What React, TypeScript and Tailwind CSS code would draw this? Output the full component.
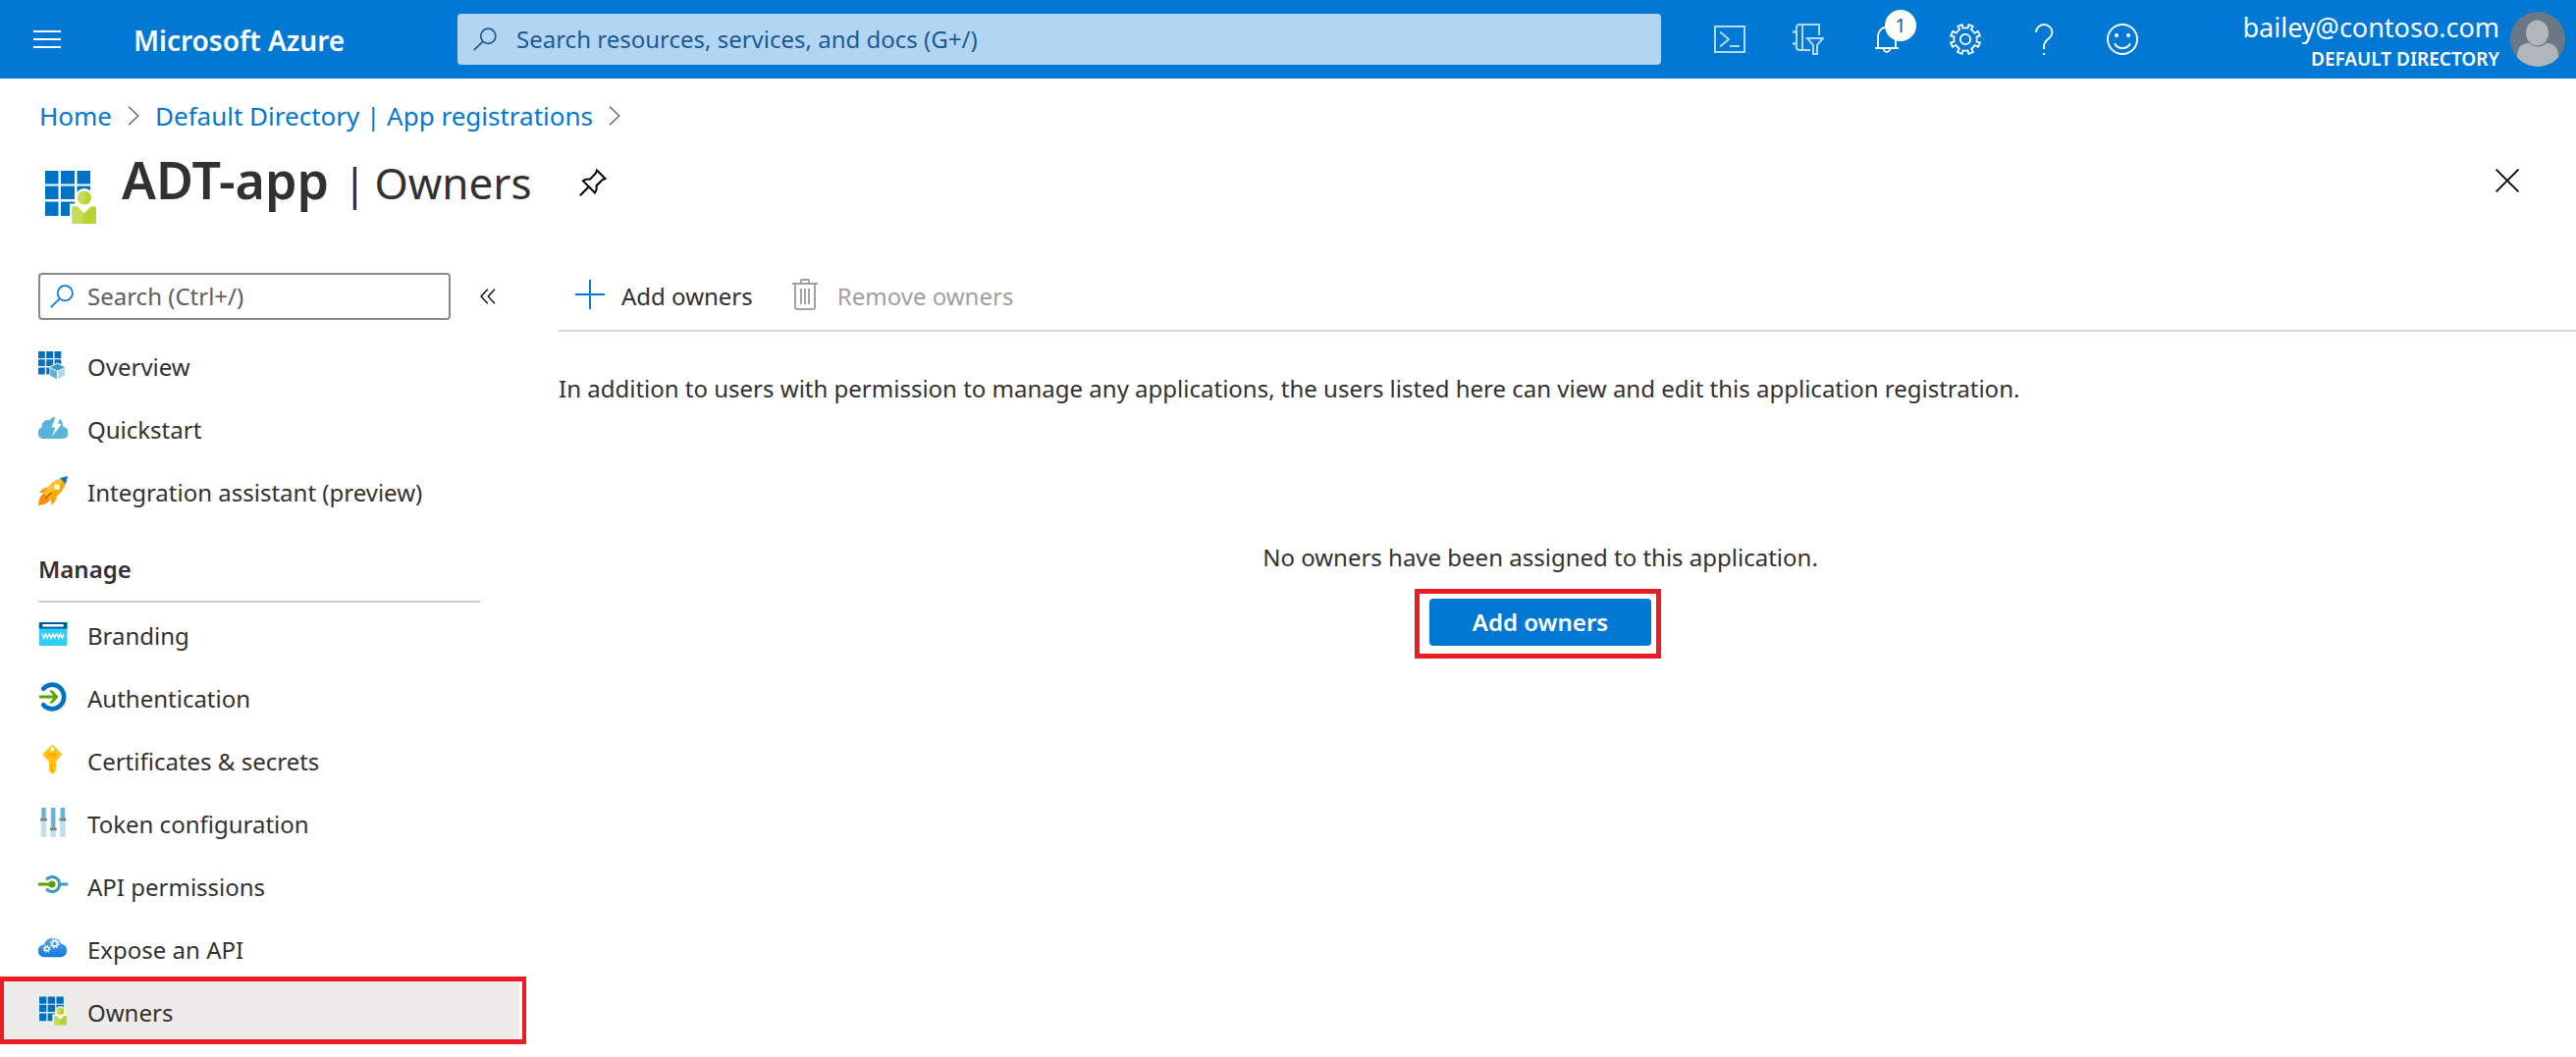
import type { ReactNode } from "react";

type IconProps = { className?: string };

function SearchIcon({ className }: IconProps) {
  return (
    <svg className={className} viewBox="0 0 24 24" fill="none" stroke="currentColor" strokeWidth="1.7" aria-hidden="true">
      <circle cx="15.3" cy="8.7" r="7.6" />
      <path d="M9.9 14.1 0.8 23.2" />
    </svg>
  );
}

function ChevronIcon() {
  return (
    <svg className="h-5 w-3 shrink-0 text-[#605e5c]" viewBox="0 0 12 20" fill="none" stroke="currentColor" strokeWidth="1.3" aria-hidden="true">
      <path d="M1 0.8 10.8 10 1 19.2" />
    </svg>
  );
}

function ConsoleIcon() {
  return (
    <svg className="h-8 w-8 text-[#b5d8f5]" viewBox="0 0 32 32" fill="none" stroke="currentColor" strokeWidth="2" aria-hidden="true">
      <rect x="1" y="3" width="30" height="26" />
      <path d="M6 8.5 15 16 6 23.5M16 23h10" />
    </svg>
  );
}

function DirectoryFilterIcon() {
  return (
    <svg className="h-8 w-8 text-[#b5d8f5]" viewBox="0 0 32 32" fill="none" stroke="currentColor" strokeWidth="2" aria-hidden="true">
      <path d="M27 12V1H7Q4 1 4 4V24Q4 27 7 27H18M10 1V27" />
      <path d="M0 8.5H5M0 20.5H5" strokeWidth="2.6" />
      <path d="M15 15H31L25 22V31H21V22Z" />
    </svg>
  );
}

function BellIcon() {
  return (
    <svg className="h-8 w-8" viewBox="0 0 32 32" fill="none" stroke="currentColor" strokeWidth="1.8" aria-hidden="true">
      <path d="M4 25H28M7 25V13A9 9.5 0 0 1 25 13V25" />
      <path d="M12.8 25.5A3.2 3.4 0 0 0 19.2 25.5" />
    </svg>
  );
}

function GearIcon() {
  return (
    <svg className="h-8 w-8" viewBox="0 0 32 32" fill="none" stroke="currentColor" strokeWidth="1.8" strokeLinejoin="round" aria-hidden="true">
      <path d="M13.4 4.6 12.7 1 8.2 2.9 10.3 6A11.4 11.4 0 0 0 6.6 9.7L3.2 7.8 1 12.7 4.6 13.4A11.4 11.4 0 0 0 4.6 18.6L1 19.3 2.9 23.8 6.4 22A11.4 11.4 0 0 0 9.8 25.6L7.9 29 12.7 31 13.4 27.4A11.4 11.4 0 0 0 18.6 27.4L19.3 31 24 29 22.2 25.6A11.4 11.4 0 0 0 25.6 22L29.1 23.8 31 19.3 27.4 18.6A11.4 11.4 0 0 0 27.4 13.4L31 12.7 28.8 7.8 25.4 9.7A11.4 11.4 0 0 0 21.7 6L23.8 2.9 19.3 1 18.6 4.6A11.4 11.4 0 0 0 13.4 4.6Z" />
      <circle cx="16" cy="16" r="5.2" />
    </svg>
  );
}

function HelpIcon() {
  return (
    <svg className="h-8 w-8" viewBox="0 0 32 32" fill="none" stroke="currentColor" strokeWidth="1.8" aria-hidden="true">
      <path d="M8 9A8.2 8 0 0 1 24.4 9C24.4 15.5 16 16 16 23V26" />
      <path d="M16 30V32" strokeWidth="2.2" />
    </svg>
  );
}

function SmileIcon() {
  return (
    <svg className="h-8 w-8" viewBox="0 0 32 32" fill="none" stroke="currentColor" strokeWidth="1.9" aria-hidden="true">
      <circle cx="16" cy="16" r="15" />
      <path d="M8 20.2A9 9 0 0 0 24 20.2" />
      <circle cx="10" cy="12" r="2" fill="currentColor" stroke="none" />
      <circle cx="22" cy="12" r="2" fill="currentColor" stroke="none" />
    </svg>
  );
}

function Avatar() {
  return (
    <svg className="h-14 w-14 shrink-0" viewBox="0 0 56 56" aria-hidden="true">
      <defs>
        <clipPath id="avatar-clip"><circle cx="28" cy="28" r="28" /></clipPath>
      </defs>
      <g clipPath="url(#avatar-clip)">
        <rect width="56" height="56" fill="#6b7785" />
        <path d="M7 56V44Q8 32 19 32Q28 39 37 32Q48 32 49 44V56Z" fill="#b0b6bb" />
        <ellipse cx="27.5" cy="21.5" rx="11.5" ry="13" fill="#b0b6bb" />
      </g>
    </svg>
  );
}

function OwnersIcon({ className }: IconProps) {
  return (
    <svg className={className} viewBox="0 0 52 54" aria-hidden="true">
      <g fill="#0072c6">
        <path d="M0 0H13.5V13.5H0ZM16 0H30V13.5H16ZM32.5 0H46V13.5H32.5Z" />
        <path d="M0 15.5H13.5V29H0ZM16 15.5H30V29H16ZM32.5 15.5H46V29H32.5Z" />
        <path d="M0 31.5H13.5V46H0ZM16 31.5H30V46H16Z" />
      </g>
      <circle cx="40" cy="27.5" r="9.5" fill="#fff" />
      <path d="M25 33.5H52V54H25Z" fill="#fff" />
      <circle cx="40" cy="27.5" r="7" fill="#b8d432" />
      <path d="M40 20.5A7 7 0 0 0 38.5 34.3Q41.5 27 40 20.5Z" fill="#c4dd5c" />
      <path d="M27.5 36.5H33L39.5 43.5 46.5 36.5H52V54H27.5Z" fill="#b8d432" />
      <path d="M27.5 36.5H33L39.5 43.5 38.5 54H27.5Z" fill="#c4dd5c" />
    </svg>
  );
}

function PinIcon() {
  return (
    <svg className="h-7 w-7" viewBox="0 0 28 28" fill="none" stroke="currentColor" strokeWidth="2" strokeLinejoin="miter" aria-hidden="true">
      <path d="M18 1.5 26.5 10 23.5 11.3 17.5 17.2Q18.3 21.5 16 24.5L3.8 12.2Q7 9.7 11 10.7L16.7 4.7ZM9.8 18.2 0.8 27.2" />
    </svg>
  );
}

function OverviewIcon() {
  return (
    <svg className="h-[30px] w-[30px]" viewBox="0 0 30 30" aria-hidden="true">
      <path fill="#0072c6" d="M0 1H6.8V8H0ZM8.2 1H15.2V8H8.2ZM16.5 1H23.3V8H16.5ZM0 9.3H6.8V16H0ZM8.2 9.3H15.2V16H8.2ZM16.5 9.3H23.3V16H16.5ZM0 17.5H6.8V24.4H0ZM8.2 17.5H15.2V24.4H8.2Z" />
      <path fill="#fff" d="M19.5 12.4 27.8 16.4V26L19.5 30 11.4 26V16.4Z" />
      <path fill="#3999c6" d="M19.5 13.4 27 17.2 19.5 20.8 12.2 17.2Z" />
      <path fill="#59b4d9" d="M12.2 18.1 19 21.5V29.3L12.2 25.7Z" />
      <path fill="#a9dbef" d="M27 18.1 20.1 21.5V29.3L27 25.7Z" />
    </svg>
  );
}

function QuickstartIcon() {
  return (
    <svg className="h-[30px] w-[30px]" viewBox="0 0 30 30" aria-hidden="true">
      <path fill="#59b4d9" d="M6 26A6 6 0 0 1 3.8 14.3A6 6 0 0 1 11.5 7.2Q14 3.5 18.6 4.2Q23.3 5 25 10.5L25.3 14A6 6 0 0 1 24.5 26Z" />
      <path fill="#fff" d="M17.5 3.8H22.6L20 10.8H24L14.3 23.2 17.2 14.6H13.6Z" />
    </svg>
  );
}

function RocketIcon() {
  return (
    <svg className="h-[30px] w-[30px]" viewBox="0 0 30 30" aria-hidden="true">
      <path fill="#ff9a1f" d="M10 11.5Q4.5 11.5 1.2 17L7 17.5ZM18.5 19.8Q19 26 13.5 29.4L12.7 23.5Z" />
      <path fill="#ff8c00" d="M6 17.5Q0.5 20 0 30Q9.5 29.2 12.5 23.6Z" />
      <path fill="#fcc32a" d="M23 2.3 28 7.2Q25.5 17 13.5 24.3L6 16.7Q12.5 5 23 2.3Z" />
      <path fill="#f2ae00" d="M28 7.2Q25.5 17 13.5 24.3L9.8 20.6 25.5 4.8Z" />
      <path fill="#0f72c9" d="M30 0 28 8.2 22 2.2Z" />
      <circle cx="19.2" cy="11.2" r="2.8" fill="#fff" />
      <path d="M7 23.3 13.6 16.7" stroke="#c8550d" strokeWidth="1.6" />
    </svg>
  );
}

function BrandingIcon() {
  return (
    <svg className="h-[30px] w-[30px]" viewBox="0 0 30 30" aria-hidden="true">
      <rect x="0.8" y="3" width="28.6" height="24" rx="1.2" fill="#32cdf2" />
      <path fill="#005ba1" d="M2 3H28.2Q29.4 3 29.4 4.2V9.4H0.8V4.2Q0.8 3 2 3Z" />
      <rect x="4.3" y="5" width="21.4" height="2.6" fill="#fff" />
      <path d="M3.8 14.8 5.5 19.2 7.3 15 9.1 19.2 10.8 14.8M11.3 14.8 13 19.2 14.9 15 16.7 19.2 18.4 14.8M19 14.8 20.7 19.2 22.5 15 24.3 19.2 26 14.8" fill="none" stroke="#fff" strokeWidth="1.4" />
    </svg>
  );
}

function AuthenticationIcon() {
  return (
    <svg className="h-[30px] w-[30px]" viewBox="0 0 30 30" fill="none" aria-hidden="true">
      <path d="M5.2 6.8A12 12.4 0 1 1 5.2 23.2" stroke="#0072c6" strokeWidth="4.6" strokeLinecap="round" />
      <path d="M1 15H18" stroke="#57a300" strokeWidth="3" />
      <path d="M11 8.6H14.6L20.6 15 14.6 21.4H11L16.6 15Z" fill="#57a300" />
    </svg>
  );
}

function KeyIcon() {
  return (
    <svg className="h-[30px] w-[30px]" viewBox="0 0 30 30" aria-hidden="true">
      <path fill="#ffc514" fillRule="evenodd" d="M12.8 0.8Q14.3-.5 15.8 .8L23.2 8.2Q24.4 9.6 23.2 11L18 17.2V19L19 20 18 21.2 19 22.4 18 23.6V26.5L14.5 30 11 26.5V17.2L5.4 11Q4.2 9.6 5.4 8.2ZM14.3 2.2A1.9 2.1 0 1 0 14.3 6.4A1.9 2.1 0 1 0 14.3 2.2Z" />
      <path d="M9.5 9.6H19M9.5 12H19" stroke="#ff9b0a" strokeWidth="1.1" />
      <path d="M13.7 18.5V27.5" stroke="#ff9b0a" strokeWidth="1.2" />
    </svg>
  );
}

function SlidersIcon() {
  return (
    <svg className="h-[30px] w-[30px]" viewBox="0 0 30 30" aria-hidden="true">
      <path fill="#dcdcdc" d="M2.6 0H8.4V30H2.6ZM12.3 0H18.1V30H12.3ZM22 0H27.8V30H22Z" />
      <path fill="#59b4d9" d="M3.6 0H7.4V12H3.6ZM13.3 0H17.1V21H13.3ZM23 0H26.8V12H23Z" />
      <path fill="#b8e0f0" d="M3.6 12H7.4V29H3.6ZM13.3 21H17.1V29H13.3ZM23 12H26.8V29H23Z" />
      <path fill="#9a9a9a" d="M2.2 10.5H8.8V13.4H2.2ZM11.9 20.3H18.5V23.2H11.9ZM21.6 10.5H28.2V13.4H21.6Z" />
      <path fill="#5c5c5c" d="M2.2 11.8H8.8V12.8H2.2ZM11.9 21.6H18.5V22.6H11.9ZM21.6 11.8H28.2V12.8H21.6Z" />
    </svg>
  );
}

function ApiPermissionsIcon() {
  return (
    <svg className="h-[30px] w-[30px]" viewBox="0 0 30 30" fill="none" aria-hidden="true">
      <path d="M8.2 9.2A7.6 7.6 0 1 1 8.2 18.8M22 14H30" stroke="#3999c6" strokeWidth="3" />
      <path d="M0 14H13" stroke="#57a300" strokeWidth="3" />
      <circle cx="14" cy="14" r="3.6" fill="#57a300" />
    </svg>
  );
}

function ExposeApiIcon() {
  return (
    <svg className="h-[30px] w-[30px]" viewBox="0 0 30 30" fill="none" aria-hidden="true">
      <defs>
        <linearGradient id="cloud-fill" x1="0" y1="0" x2="0" y2="1">
          <stop offset="0" stopColor="#5ea0ef" />
          <stop offset="1" stopColor="#0f7bdc" />
        </linearGradient>
      </defs>
      <path fill="url(#cloud-fill)" d="M6.5 24.2A6.5 6.3 0 0 1 6 11.4A9.2 9.4 0 0 1 23.4 10.8A6.8 6.8 0 0 1 23.5 24.2Z" />
      <circle cx="16.7" cy="10.4" r="2.7" stroke="#fff" strokeWidth="1.7" />
      <circle cx="16.7" cy="10.4" r="4.3" stroke="#fff" strokeWidth="1.4" strokeDasharray="1.7 1.68" />
      <circle cx="8.7" cy="15.8" r="2" stroke="#fff" strokeWidth="1.4" />
      <circle cx="8.7" cy="15.8" r="3.3" stroke="#fff" strokeWidth="1.2" strokeDasharray="1.3 1.29" />
    </svg>
  );
}

function PlusIcon() {
  return (
    <svg className="h-[30px] w-[30px] text-[#0078d4]" viewBox="0 0 30 30" stroke="currentColor" strokeWidth="2" aria-hidden="true">
      <path d="M15 0V30M0 15H30" />
    </svg>
  );
}

function TrashIcon() {
  return (
    <svg className="h-8 w-[26px]" viewBox="0 0 26 32" fill="none" stroke="currentColor" strokeWidth="1.9" aria-hidden="true">
      <path d="M0 5H26M9 5V1.5Q9 1 9.5 1H16.5Q17 1 17 1.5V5M3 5V29.5Q3 31 4.5 31H21.5Q23 31 23 29.5V5" />
      <path d="M9 10V26M13 10V26M17 10V26" />
    </svg>
  );
}

type NavItem = { label: string; icon: ReactNode; selected?: boolean };

const topItems: NavItem[] = [
  { label: "Overview", icon: <OverviewIcon /> },
  { label: "Quickstart", icon: <QuickstartIcon /> },
  { label: "Integration assistant (preview)", icon: <RocketIcon /> },
];

const manageItems: NavItem[] = [
  { label: "Branding", icon: <BrandingIcon /> },
  { label: "Authentication", icon: <AuthenticationIcon /> },
  { label: "Certificates & secrets", icon: <KeyIcon /> },
  { label: "Token configuration", icon: <SlidersIcon /> },
  { label: "API permissions", icon: <ApiPermissionsIcon /> },
  { label: "Expose an API", icon: <ExposeApiIcon /> },
  { label: "Owners", icon: <OwnersIcon className="h-[30px] w-7" />, selected: true },
];

function NavList({ items }: { items: NavItem[] }) {
  return (
    <ul>
      {items.map((item) => (
        <li key={item.label} className="relative">
          <a
            href="#"
            aria-current={item.selected ? "page" : undefined}
            className={
              item.selected
                ? "flex h-16 items-center gap-5 bg-[#edebe9] pl-[39px]"
                : "flex h-16 items-center gap-5 pl-[39px]"
            }
          >
            <span className="flex w-[30px] justify-center pb-1">{item.icon}</span>
            {item.label}
          </a>
          {item.selected && (
            <span className="pointer-events-none absolute -top-[5px] -right-[7px] bottom-0 left-0 border-x-4 border-y-5 border-[#ed1c24]" />
          )}
        </li>
      ))}
    </ul>
  );
}

function HeaderButton({ label, children }: { label: string; children: ReactNode }) {
  return (
    <button type="button" aria-label={label} className="relative flex h-20 w-20 items-center justify-center">
      {children}
    </button>
  );
}

function TopBar() {
  return (
    <header className="flex h-20 items-center bg-[#0078d4] text-white">
      <div className="flex w-[466px] shrink-0 items-center pl-[34px]">
        <button type="button" aria-label="Show portal menu" className="flex w-7 flex-col gap-1.5">
          <span className="h-0.5 bg-white" />
          <span className="h-0.5 bg-white" />
          <span className="h-0.5 bg-white" />
        </button>
        <a href="#" className="ml-[74px] pt-0.5 text-[28px] leading-9 font-semibold">Microsoft Azure</a>
      </div>
      <label className="flex h-[52px] min-w-0 flex-1 items-center gap-5 rounded bg-[#b2d6f2] pl-4 text-[#1b5a97]">
        <SearchIcon className="h-6 w-6 shrink-0" />
        <input
          type="text"
          aria-label="Search resources, services, and docs"
          placeholder="Search resources, services, and docs (G+/)"
          className="min-w-0 flex-1 bg-transparent outline-none placeholder:text-[#1b5a97]"
        />
      </label>
      <div className="ml-[30px] flex shrink-0 items-center">
        <HeaderButton label="Cloud Shell"><ConsoleIcon /></HeaderButton>
        <HeaderButton label="Directory and subscription"><DirectoryFilterIcon /></HeaderButton>
        <HeaderButton label="Notifications">
          <BellIcon />
          <span className="absolute top-2.5 left-[38px] flex h-8 w-8 items-center justify-center rounded-full bg-white text-xl text-[#1b5a97]">1</span>
        </HeaderButton>
        <HeaderButton label="Settings"><GearIcon /></HeaderButton>
        <HeaderButton label="Help"><HelpIcon /></HeaderButton>
        <HeaderButton label="Feedback"><SmileIcon /></HeaderButton>
      </div>
      <button type="button" className="flex w-[422px] shrink-0 items-center justify-end gap-[11px] pr-[11px]">
        <span className="flex flex-col items-end pt-1">
          <span className="text-[27px] leading-9">bailey@contoso.com</span>
          <span className="text-[19px] leading-7 font-semibold">DEFAULT DIRECTORY</span>
        </span>
        <Avatar />
      </button>
    </header>
  );
}

function Sidebar() {
  return (
    <aside className="w-[529px] shrink-0">
      <div className="mb-4 flex items-center pl-[39px]">
        <label className="flex h-12 w-[420px] items-center gap-3.5 rounded border-2 border-[#8a8886] pl-2.5">
          <SearchIcon className="h-6 w-6 shrink-0 text-[#0078d4]" />
          <input
            type="text"
            aria-label="Search menu"
            placeholder="Search (Ctrl+/)"
            className="min-w-0 flex-1 bg-transparent outline-none placeholder:text-[#605e5c]"
          />
        </label>
        <button type="button" aria-label="Collapse menu" className="ml-[30px]">
          <svg className="h-4 w-4 text-black" viewBox="0 0 16 16" fill="none" stroke="currentColor" strokeWidth="1.3" aria-hidden="true">
            <path d="M7.8 0.8 1 8 7.8 15.2M15 0.8 8.2 8 15 15.2" />
          </svg>
        </button>
      </div>
      <nav aria-label="Resource menu">
        <NavList items={topItems} />
        <h2 className="mr-10 mb-0.5 ml-[39px] h-20 border-b-2 border-[#cccccc] pt-7 leading-9 font-semibold">Manage</h2>
        <NavList items={manageItems} />
      </nav>
    </aside>
  );
}

export default function App() {
  return (
    <div className="min-h-screen bg-white font-['Noto_Sans','Open_Sans',sans-serif] text-2xl text-[#323130]">
      <TopBar />
      <nav aria-label="Breadcrumb" className="mt-5 flex h-9 items-center gap-4 pl-10 text-[26px] leading-9 text-[#0078d4]">
        <a href="#">Home</a>
        <ChevronIcon />
        <a href="#">Default Directory | App registrations</a>
        <ChevronIcon />
      </nav>
      <div className="flex h-[92px] items-center pr-[58px] pl-[46px]">
        <OwnersIcon className="h-[54px] w-[52px] self-end" />
        <h1 className="ml-[26px] flex items-baseline pt-1 text-[52px] leading-[64px] font-semibold">
          ADT-app
          <span className="ml-3.5 flex gap-2 text-[44px] font-normal">
            <span>|</span>
            <span>Owners</span>
          </span>
        </h1>
        <button type="button" aria-label="Pin" className="ml-12 pt-2 text-black"><PinIcon /></button>
        <button type="button" aria-label="Close" className="ml-auto pt-1 text-black">
          <svg className="h-6 w-6" viewBox="0 0 24 24" stroke="currentColor" strokeWidth="1.8" aria-hidden="true">
            <path d="M0.6 0.6 23.4 23.4M23.4 0.6 0.6 23.4" />
          </svg>
        </button>
      </div>
      <div className="mt-[50px] flex gap-10">
        <Sidebar />
        <main className="min-w-0 flex-1">
          <div className="flex h-[60px] items-start gap-10 border-b-2 border-[#d6d6d6] pl-[17px]">
            <button type="button" className="flex h-12 items-center gap-[17px]">
              <span className="pb-1"><PlusIcon /></span>
              Add owners
            </button>
            <button type="button" disabled className="flex h-12 items-center gap-5 text-[#a19f9d]">
              <span className="pb-1"><TrashIcon /></span>
              Remove owners
            </button>
          </div>
          <p className="mt-10 leading-9">
            In addition to users with permission to manage any applications, the users listed here can view and edit this application registration.
          </p>
          <section className="mt-[136px] flex flex-col items-center pr-[55px]">
            <p className="leading-9">No owners have been assigned to this application.</p>
            <div className="relative mt-6">
              <button type="button" className="flex h-12 w-[226px] items-center justify-center rounded bg-[#0078d4] font-semibold text-white">
                Add owners
              </button>
              <span className="pointer-events-none absolute -top-2.5 -right-2.5 -bottom-[13px] -left-[15px] border-5 border-[#ed1c24]" />
            </div>
          </section>
        </main>
      </div>
    </div>
  );
}
